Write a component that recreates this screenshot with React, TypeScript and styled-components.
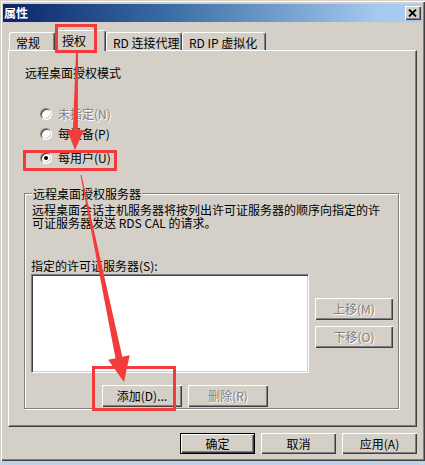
import React from "react";
import styled, { createGlobalStyle, css } from "styled-components";

const GlobalStyle = createGlobalStyle`
  html, body { margin: 0; padding: 0; background: #bdd3ec; }
  body {
    font-family: "Noto Sans CJK SC", "Liberation Sans", sans-serif;
    font-size: 12px;
    color: #000;
  }
  * { box-sizing: border-box; }
`;

const raised = css`
  box-shadow: inset 1px 1px #fff, inset -1px -1px #404040, inset -2px -2px #808080;
`;

const Window = styled.div`
  position: relative;
  width: 425px;
  height: 461px;
  padding: 4px 3px 0 3px;
  background: #d4d0c8;
  box-shadow: inset 1px 1px #d4d0c8, inset 2px 2px #fff, inset -1px -1px #404040,
    inset -2px -2px #808080;
  display: flex;
  flex-direction: column;
`;

const TitleBar = styled.div`
  height: 18px;
  display: flex;
  align-items: center;
  justify-content: space-between;
  padding: 0 1px 0 1px;
  background: linear-gradient(90deg, #0a246a 0%, #3a6ea5 40%, #a6caf0 90%);
`;

const TitleText = styled.span`
  color: #fff;
  font-weight: bold;
  font-size: 12px;
  line-height: 18px;
`;

const CloseButton = styled.div`
  width: 16px;
  height: 14px;
  background: #d4d0c8;
  ${raised};
  display: flex;
  align-items: center;
  justify-content: center;
  padding: 0 1px 1px 0;
`;

const TabRow = styled.div`
  height: 28px;
  display: flex;
  align-items: flex-end;
  padding-left: 6px;
  position: relative;
  z-index: 1;
`;

const Tab = styled.div<{ $w: number; $active?: boolean }>`
  width: ${(p) => p.$w}px;
  height: ${(p) => (p.$active ? 21 : 18)}px;
  margin-bottom: ${(p) => (p.$active ? -1 : 0)}px;
  padding: 3px 0 0 6px;
  line-height: 14px;
  white-space: nowrap;
  background: #d4d0c8;
  border-top: 1px solid #fff;
  border-left: 1px solid #fff;
  border-right: 1px solid #404040;
  border-radius: 3px 3px 0 0;
  box-shadow: inset -1px 0 #808080;
`;

const Panel = styled.div`
  margin-left: 5px;
  width: 409px;
  height: 377px;
  border: 1px solid;
  border-color: #fff #404040 #404040 #fff;
  box-shadow: inset -1px -1px #808080;
  padding: 15px 0 0 15px;
  display: flex;
  flex-direction: column;
`;

const Heading = styled.div`
  line-height: 14px;
  padding-left: 1px;
`;

const RadioList = styled.div`
  margin-top: 27px;
  display: flex;
  flex-direction: column;
`;

const RadioRow = styled.div<{ $gap: number; $disabled?: boolean }>`
  margin-top: ${(p) => p.$gap}px;
  margin-left: 16px;
  height: 14px;
  display: flex;
  align-items: center;
  gap: 6px;
  line-height: 14px;
  ${(p) =>
    p.$disabled &&
    css`
      color: #808080;
      text-shadow: 1px 1px 0 #fff;
    `}
`;

const RadioCircle = styled.span<{ $checked?: boolean }>`
  width: 12px;
  height: 12px;
  border-radius: 50%;
  border: 1px solid;
  border-color: #808080 #fff #fff #808080;
  box-shadow: inset 1px 1px #404040, inset -1px -1px #d4d0c8;
  background: #fff;
  display: flex;
  align-items: center;
  justify-content: center;
  &::after {
    content: "";
    width: 4px;
    height: 4px;
    border-radius: 50%;
    background: ${(p) => (p.$checked ? "#000" : "transparent")};
  }
`;

const Group = styled.div`
  position: relative;
  margin-top: 28px;
  width: 375px;
  height: 216px;
  border: 1px solid #808080;
  box-shadow: inset 1px 1px #fff, 1px 1px #fff;
  padding: 9px 0 0 6px;
  display: flex;
  flex-direction: column;
`;

const Legend = styled.span`
  position: absolute;
  top: -7px;
  left: 7px;
  padding: 0 1px;
  line-height: 14px;
  background: #d4d0c8;
`;

const Desc = styled.div`
  line-height: 13px;
  padding-left: 1px;
  white-space: nowrap;
`;

const Label = styled.div`
  margin-top: 31px;
  line-height: 12px;
  white-space: nowrap;
`;

const ListRow = styled.div`
  margin-top: 2px;
  display: flex;
  gap: 6px;
`;

const ListBox = styled.div`
  width: 278px;
  height: 99px;
  background: #fff;
  border: 1px solid;
  border-color: #808080 #fff #fff #808080;
  box-shadow: inset 1px 1px #404040, inset -1px -1px #d4d0c8;
`;

const SideButtons = styled.div`
  padding-top: 24px;
  display: flex;
  flex-direction: column;
  gap: 6px;
`;

const Button = styled.div<{ $w: number; $h: number; $disabled?: boolean; $default?: boolean }>`
  width: ${(p) => p.$w}px;
  height: ${(p) => p.$h}px;
  background: #d4d0c8;
  display: flex;
  align-items: center;
  justify-content: center;
  white-space: nowrap;
  line-height: 14px;
  ${(p) =>
    p.$default
      ? css`
          border: 1px solid #000;
          box-shadow: inset 1px 1px #fff, inset -1px -1px #404040, inset -2px -2px #808080;
        `
      : raised}
  ${(p) =>
    p.$disabled &&
    css`
      color: #808080;
      text-shadow: 1px 1px 0 #fff;
    `}
`;

const ActionRow = styled.div`
  margin-top: 12px;
  padding-left: 71px;
  display: flex;
  gap: 6px;
`;

const BottomRow = styled.div`
  margin-top: 6px;
  margin-right: 5px;
  display: flex;
  justify-content: flex-end;
  gap: 6px;
`;

const Overlay = styled.svg`
  position: absolute;
  left: 0;
  top: 0;
  pointer-events: none;
  z-index: 5;
`;

type Pt = [number, number];

function arrowPoints(
  s: Pt,
  t: Pt,
  w1: number,
  w2: number,
  headLen: number,
  headW: number
): string {
  const dx = t[0] - s[0];
  const dy = t[1] - s[1];
  const L = Math.hypot(dx, dy);
  const ux = dx / L;
  const uy = dy / L;
  const nx = -uy;
  const ny = ux;
  const bx = t[0] - ux * headLen;
  const by = t[1] - uy * headLen;
  const pts: Pt[] = [
    [s[0] + (nx * w1) / 2, s[1] + (ny * w1) / 2],
    [bx + (nx * w2) / 2, by + (ny * w2) / 2],
    [bx + (nx * headW) / 2, by + (ny * headW) / 2],
    [t[0], t[1]],
    [bx - (nx * headW) / 2, by - (ny * headW) / 2],
    [bx - (nx * w2) / 2, by - (ny * w2) / 2],
    [s[0] - (nx * w1) / 2, s[1] - (ny * w1) / 2],
  ];
  return pts.map((p) => `${p[0].toFixed(1)},${p[1].toFixed(1)}`).join(" ");
}

const RED = "#f23c3c";

export default function App() {
  return (
    <>
      <GlobalStyle />
      <Window>
        <TitleBar>
          <TitleText>属性</TitleText>
          <CloseButton>
            <svg width="9" height="8" viewBox="0 0 9 8">
              <path d="M1 0.5 L8 7.5 M8 0.5 L1 7.5" stroke="#000" strokeWidth="1.8" />
            </svg>
          </CloseButton>
        </TitleBar>
        <TabRow>
          <Tab $w={46}>常规</Tab>
          <Tab $w={51} $active>
            授权
          </Tab>
          <Tab $w={76}>RD 连接代理</Tab>
          <Tab $w={84}>RD IP 虚拟化</Tab>
        </TabRow>
        <Panel>
          <Heading>远程桌面授权模式</Heading>
          <RadioList>
            <RadioRow $gap={0} $disabled>
              <RadioCircle />
              未指定(N)
            </RadioRow>
            <RadioRow $gap={6}>
              <RadioCircle />
              每设备(P)
            </RadioRow>
            <RadioRow $gap={10}>
              <RadioCircle $checked />
              每用户(U)
            </RadioRow>
          </RadioList>
          <Group>
            <Legend>远程桌面授权服务器</Legend>
            <Desc>
              远程桌面会话主机服务器将按列出许可证服务器的顺序向指定的许
              <br />
              可证服务器发送 RDS CAL 的请求。
            </Desc>
            <Label>指定的许可证服务器(S):</Label>
            <ListRow>
              <ListBox />
              <SideButtons>
                <Button $w={78} $h={22} $disabled>
                  上移(M)
                </Button>
                <Button $w={78} $h={22} $disabled>
                  下移(O)
                </Button>
              </SideButtons>
            </ListRow>
            <ActionRow>
              <Button $w={80} $h={22}>
                添加(D)...
              </Button>
              <Button $w={80} $h={22} $disabled>
                删除(R)
              </Button>
            </ActionRow>
          </Group>
        </Panel>
        <BottomRow>
          <Button $w={75} $h={21} $default>
            确定
          </Button>
          <Button $w={75} $h={21}>
            取消
          </Button>
          <Button $w={75} $h={21}>
            应用(A)
          </Button>
        </BottomRow>
        <Overlay width="425" height="465" viewBox="0 0 425 465">
          <rect x="56.5" y="25.5" width="39" height="26" fill="none" stroke={RED} strokeWidth="3" />
          <rect x="24.5" y="151.5" width="91" height="18" fill="none" stroke={RED} strokeWidth="3" />
          <rect x="93.5" y="367.5" width="81" height="42" fill="none" stroke={RED} strokeWidth="3" />
          <polygon points={arrowPoints([77, 53], [75, 150], 2, 5, 20, 17)} fill={RED} />
          <polygon points={arrowPoints([81, 175], [124, 382], 1, 7, 25, 22)} fill={RED} />
        </Overlay>
      </Window>
    </>
  );
}
